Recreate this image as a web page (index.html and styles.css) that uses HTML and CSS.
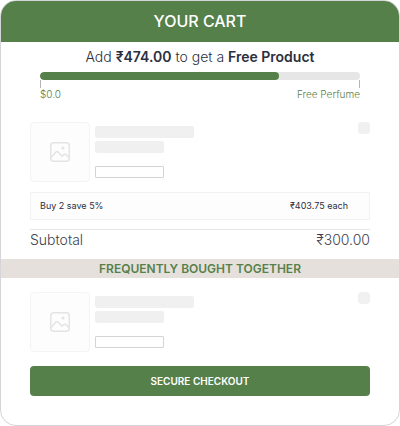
FILE: index.html
```
<!DOCTYPE html>
<html lang="en">
<head>
    <meta charset="UTF-8">
    <meta name="viewport" content="width=device-width, initial-scale=1.0">
    <title>Your Cart</title>
    <link rel="stylesheet" href="styles.css">
</head>
<body>
    <main class="cart">
        <h1 class="cart-title">YOUR CART</h1>

        <section class="reward">
            <p class="reward-text">Add <strong>₹474.00</strong> to get a <strong>Free Product</strong></p>
            <progress class="reward-bar" value="239" max="320" aria-label="Free product progress"></progress>
            <div class="reward-ticks"></div>
            <div class="reward-labels">
                <span>$0.0</span>
                <span>Free Perfume</span>
            </div>
        </section>

        <article class="item">
            <div class="thumb">
                <svg width="20" height="20" viewBox="0 0 20 20" fill="none" stroke="#e4e4e4" stroke-width="1.5" stroke-linejoin="round">
                    <rect x="0.75" y="0.75" width="18.5" height="18.5" rx="3"/>
                    <circle cx="13" cy="6" r="1.6" fill="#e4e4e4" stroke="none"/>
                    <path d="M1 15.5L6.2 9.8Q7 9 7.8 9.8L12 14.3L14.2 12.4Q15 11.8 15.8 12.5L19 15.5"/>
                </svg>
            </div>
            <div class="lines">
                <div class="line"></div>
                <div class="line short"></div>
                <div class="line short outline"></div>
            </div>
            <div class="remove"></div>
        </article>

        <div class="offer">
            <span>Buy 2 save 5%</span>
            <span>₹403.75 each</span>
        </div>

        <div class="subtotal">
            <span>Subtotal</span>
            <span>₹300.00</span>
        </div>

        <h2 class="together">FREQUENTLY BOUGHT TOGETHER</h2>

        <article class="item">
            <div class="thumb">
                <svg width="20" height="20" viewBox="0 0 20 20" fill="none" stroke="#e4e4e4" stroke-width="1.5" stroke-linejoin="round">
                    <rect x="0.75" y="0.75" width="18.5" height="18.5" rx="3"/>
                    <circle cx="13" cy="6" r="1.6" fill="#e4e4e4" stroke="none"/>
                    <path d="M1 15.5L6.2 9.8Q7 9 7.8 9.8L12 14.3L14.2 12.4Q15 11.8 15.8 12.5L19 15.5"/>
                </svg>
            </div>
            <div class="lines">
                <div class="line"></div>
                <div class="line short"></div>
                <div class="line short outline"></div>
            </div>
            <div class="remove"></div>
        </article>

        <button class="checkout" type="button">SECURE CHECKOUT</button>
    </main>
</body>
</html>
```
FILE: styles.css
```
* {
    margin: 0;
    padding: 0;
    box-sizing: border-box;
}

body {
    background: white;
    color: #2b2f3e;
    font-family: 'Inter', sans-serif;
}

.cart {
    display: flex;
    flex-direction: column;
    border: 1px solid #d5d5d9;
    border-radius: 16px;
    padding-bottom: 29px;
    overflow: hidden;
    background: white;
}

.cart-title {
    background: #56804a;
    color: white;
    font-size: 16px;
    font-weight: 500;
    line-height: 41px;
    text-align: center;
}

/* Free product progress */
.reward {
    padding: 6px 39px 0;
}

.reward-text {
    font-size: 14px;
    font-weight: 300;
    line-height: 18px;
    margin-bottom: 6px;
    text-align: center;
    white-space: nowrap;
}

.reward-text strong {
    font-weight: 600;
}

.reward-bar {
    display: block;
    width: 100%;
    height: 8px;
    border: none;
    border-radius: 4px;
    overflow: hidden;
    appearance: none;
    background: #e6e6e6;
}

.reward-bar::-webkit-progress-bar {
    background: #e6e6e6;
}

.reward-bar::-webkit-progress-value {
    background: #56804a;
    border-radius: 4px;
}

.reward-ticks {
    height: 8px;
    border: solid #b5b5b5;
    border-width: 0 1px;
}

.reward-labels {
    display: flex;
    justify-content: space-between;
    color: #56804a;
    font-size: 10px;
    font-weight: 300;
    line-height: 12px;
}

/* Placeholder product row */
.item {
    display: flex;
    gap: 5px;
    margin: 22px 29px 0;
}

.thumb {
    display: flex;
    align-items: center;
    justify-content: center;
    width: 60px;
    height: 60px;
    border: 1px solid #f4f4f4;
    border-radius: 4px;
    background: #fdfdfd;
}

.lines {
    display: flex;
    flex: 1;
    flex-direction: column;
    gap: 3px;
    padding-top: 4px;
}

.line {
    width: 99px;
    height: 12px;
    border-radius: 2px;
    background: #f0f0f0;
}

.line.short {
    width: 69px;
}

.line.outline {
    margin-top: 10px;
    border: 1px solid #d4d4d4;
    border-radius: 1px;
    background: white;
}

.remove {
    width: 12px;
    height: 12px;
    border-radius: 4px;
    background: #f0f0f0;
}

.offer {
    display: flex;
    justify-content: space-between;
    margin: 10px 29px 9px;
    padding: 0 21px 0 9px;
    border: 1px solid #f2f2f2;
    background: #fdfdfd;
    font-size: 9px;
    line-height: 26px;
}

.subtotal {
    display: flex;
    justify-content: space-between;
    margin: 0 29px 9px;
    border-top: 1px solid #e6e6e6;
    color: #3e414d;
    font-size: 14px;
    font-weight: 300;
    line-height: 20px;
}

.together {
    background: #e6e0dc;
    color: #56804a;
    font-size: 12px;
    font-weight: 600;
    line-height: 19px;
    text-align: center;
}

.together + .item {
    margin-top: 14px;
}

.checkout {
    height: 30px;
    margin: 14px 29px 0;
    border: none;
    border-radius: 4px;
    background: #56804a;
    color: white;
    font-family: inherit;
    font-size: 10px;
    font-weight: 600;
    cursor: pointer;
}
```
